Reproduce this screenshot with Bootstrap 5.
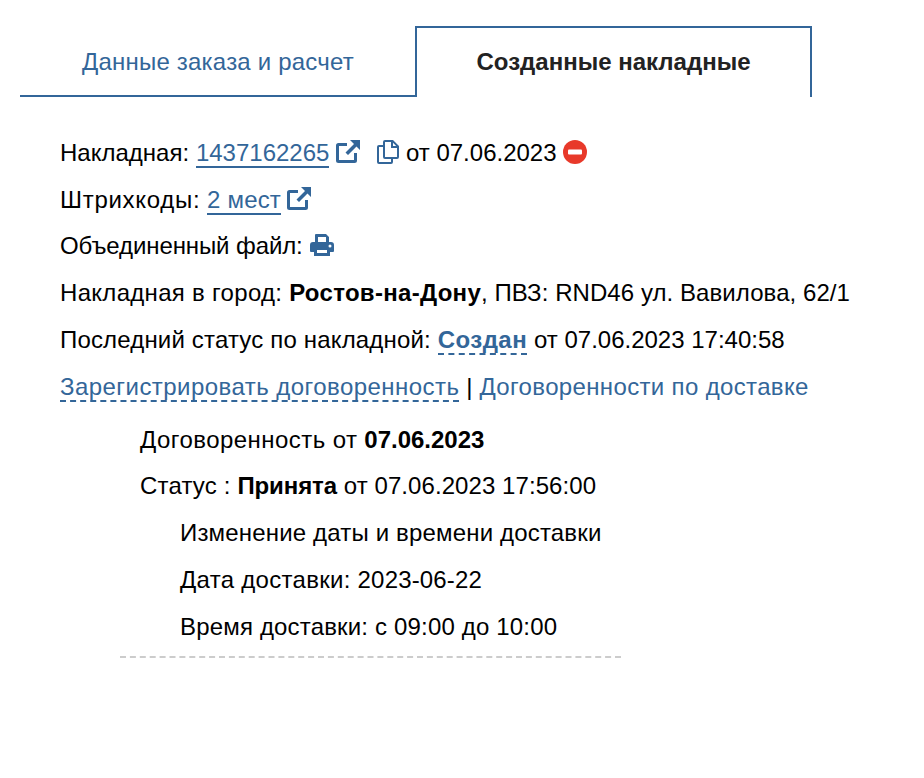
<!DOCTYPE html>
<html lang="ru">
  <head>
    <meta charset="UTF-8" />
    <meta name="viewport" content="width=device-width, initial-scale=1" />
    <title>Созданные накладные</title>
    <link
      href="https://cdn.jsdelivr.net/npm/bootstrap@5.3.2/dist/css/bootstrap.min.css"
      rel="stylesheet"
    />
    <style>
      body {
        background-color: #fff;
        color: #000;
        font-family: "Liberation Sans", Arial, sans-serif;
        font-size: 24px;
        letter-spacing: 0.17px;
      }
      a {
        color: #336699;
      }
      .ls-n10 { letter-spacing: -0.1px; }
      .ls-0 { letter-spacing: 0; }
      .ls-10 { letter-spacing: 0.07px; }
      .ls-30 { letter-spacing: 0.3px; }
      .ls-35 { letter-spacing: 0.35px; }
      .ls-45 { letter-spacing: 0.45px; }
      .ls-70 { letter-spacing: 0.7px; }
      .order-tabs {
        width: 792px;
        margin: 26px 0 0 20px;
      }
      .order-tabs .nav-link {
        height: 71px;
        line-height: 68px;
        padding: 0;
        text-align: center;
        color: #336699;
        border-radius: 0;
        font-size: 24px;
      }
      .order-tabs .tab-off {
        width: 396px;
        padding-top: 2px;
        letter-spacing: 0.2px;
        border-bottom: 2px solid #336699;
      }
      .order-tabs .tab-on {
        width: 397px;
        margin-left: -1px;
        color: #222;
        font-weight: 700;
        letter-spacing: 0;
        border: 2px solid #336699;
        border-bottom: 0;
      }
      .waybill {
        padding: 39px 0 0 60px;
      }
      .waybill p {
        margin: 0 0 14px;
        line-height: 33px;
        white-space: nowrap;
      }
      .waybill p.line-short {
        margin-bottom: 13px;
      }
      .solid-link {
        text-decoration: none;
        border-bottom: 2px solid #336699;
      }
      .dash-link {
        text-decoration: none;
        border-bottom: 2px dashed #336699;
      }
      .plain-link {
        text-decoration: none;
      }
      .ico {
        display: inline-block;
        vertical-align: -3px;
        fill: #336699;
      }
      .copy-ico {
        margin-left: 10px;
      }
      .ext-tight {
        margin-left: -1px;
      }
      .agreement {
        width: 501px;
        margin: 20px 0 0 60px;
        padding: 0 0 13px 20px;
        border-bottom: 2px dashed #ccc;
      }
      .agreement .sub-lines {
        padding-left: 40px;
      }
      .agreement .sub-lines p:last-child {
        margin-bottom: 0;
      }
    </style>
  </head>
  <body>
    <ul class="nav order-tabs">
      <li class="nav-item"><a class="nav-link tab-off" href="#">Данные заказа и расчет</a></li>
      <li class="nav-item"><a class="nav-link tab-on" href="#">Созданные накладные</a></li>
    </ul>

    <div class="waybill">
      <p>
        <span class="ls-0">Накладная:</span> <a class="solid-link ls-0" href="#">1437162265</a>
        <svg class="ico" width="24" height="24" viewBox="0 0 24 24"><path d="M2.500 3H11v3H3v14h15V13h3v7.500a2.500 2.500 0 0 1-2.500 2.500h-16A2.500 2.500 0 0 1 0 20.500v-15A2.500 2.500 0 0 1 2.500 3z"/><path d="M14 0h10v10l-3.500-3.500-8.500 8.500-2.500-2.500 8.500-8.500z"/></svg>
        <svg class="ico copy-ico" width="22" height="24" viewBox="0 0 22 24"><path d="M8 0h8l6 6v11a2 2 0 0 1-2 2h-4v3a2 2 0 0 1-2 2H2a2 2 0 0 1-2-2V7a2 2 0 0 1 2-2h4V2a2 2 0 0 1 2-2zm0 2v15h12V8h-6V2zm8 .8V6h3.200zM2 7v15h12v-3H8a2 2 0 0 1-2-2V7z"/></svg>
        <span class="ls-0">от 07.06.2023</span>
        <svg class="ico" width="24" height="24" viewBox="0 0 24 24"><circle cx="12" cy="12" r="12" fill="#e8392a"/><rect x="5" y="9.500" width="14" height="5" rx="1" fill="#fff"/></svg>
      </p>
      <p class="line-short">
        <span class="ls-70">Штрихкоды:</span> <a class="solid-link" href="#">2 мест</a>
        <svg class="ico ext-tight" width="24" height="24" viewBox="0 0 24 24"><path d="M2.500 3H11v3H3v14h15V13h3v7.500a2.500 2.500 0 0 1-2.500 2.500h-16A2.500 2.500 0 0 1 0 20.500v-15A2.500 2.500 0 0 1 2.500 3z"/><path d="M14 0h10v10l-3.500-3.500-8.500 8.500-2.500-2.500 8.500-8.500z"/></svg>
      </p>
      <p>
        <span class="ls-n10">Объединенный файл:</span>
        <svg class="ico" width="24" height="24" viewBox="0 0 24 24"><path d="M6 1h10l3 3v5h-3V4H8v5H5V2a1 1 0 0 1 1-1z"/><path d="M3 9h18a3 3 0 0 1 3 3v6a1 1 0 0 1-1 1h-3v4H4v-4H1a1 1 0 0 1-1-1v-6a3 3 0 0 1 3-3zm4 8v3h10v-3zm13-5.500a1.500 1.500 0 1 0 0 3 1.500 1.500 0 0 0 0-3z" fill-rule="evenodd"/></svg>
      </p>
      <p><span class="ls-30">Накладная в город:</span> <b class="ls-30">Ростов-на-Дону</b><span class="ls-10">, ПВЗ: RND46 ул. Вавилова, 62/1</span></p>
      <p>Последний статус по накладной: <a class="dash-link fw-bold ls-45" href="#">Создан</a> <span class="ls-0">от 07.06.2023 17:40:58</span></p>
      <p class="mb-0">
        <a class="dash-link ls-45" href="#">Зарегистрировать договоренность</a> |
        <a class="plain-link ls-35" href="#">Договоренности по доставке</a>
      </p>
      <div class="agreement">
        <p class="line-short"><span class="ls-45">Договоренность от</span> <b class="ls-0">07.06.2023</b></p>
        <p>Статус : <b class="ls-n10">Принята</b> <span class="ls-10">от 07.06.2023 17:56:00</span></p>
        <div class="sub-lines">
          <p>Изменение даты и времени доставки</p>
          <p><span class="ls-30">Дата доставки:</span> 2023-06-22</p>
          <p>Время доставки: с 09:00 до 10:00</p>
        </div>
      </div>
    </div>

    <script src="https://cdn.jsdelivr.net/npm/bootstrap@5.3.2/dist/js/bootstrap.bundle.min.js"></script>
  </body>
</html>
